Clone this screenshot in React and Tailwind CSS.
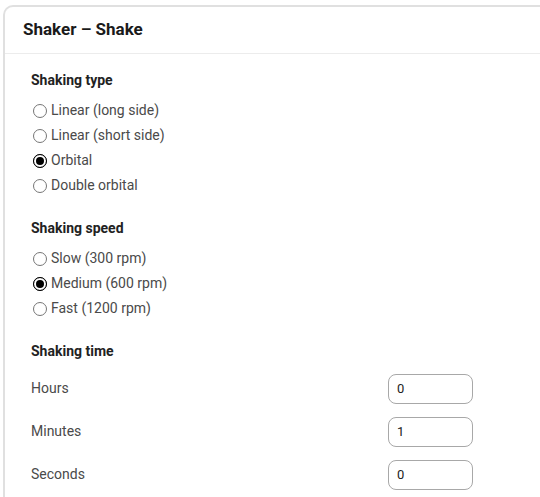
import React, { useState } from 'react';

const Radio = ({ label, checked, onChange }) => (
  <label className="flex items-center h-[25px] cursor-pointer">
    <span className="flex items-center justify-center w-[14px] h-[14px] rounded-full border border-[#767676] bg-white ml-[2px] mr-[4px]">
      {checked && <span className="w-[14px] h-[14px] rounded-full border-[1.5px] border-black flex items-center justify-center shrink-0">
        <span className="w-[8px] h-[8px] rounded-full bg-black" />
      </span>}
    </span>
    <input type="radio" className="hidden" checked={checked} onChange={onChange} />
    <span className="text-[14px] text-[#4a4a4a]">{label}</span>
  </label>
);

const TimeRow = ({ label, value, onChange }) => (
  <div className="flex items-center h-[43px]">
    <span className="w-[357px] text-[14px] text-[#4a4a4a]">{label}</span>
    <input
      type="text"
      value={value}
      onChange={(e) => onChange(e.target.value)}
      className="w-[85px] h-[30px] rounded-[8px] border border-[#a8a8a8] px-[8px] text-[13px] text-[#222] outline-none"
    />
  </div>
);

export default function App() {
  const [type, setType] = useState('Orbital');
  const [speed, setSpeed] = useState('Medium (600 rpm)');
  const [hours, setHours] = useState('0');
  const [minutes, setMinutes] = useState('1');
  const [seconds, setSeconds] = useState('0');

  const types = ['Linear (long side)', 'Linear (short side)', 'Orbital', 'Double orbital'];
  const speeds = ['Slow (300 rpm)', 'Medium (600 rpm)', 'Fast (1200 rpm)'];

  return (
    <div className="w-[540px] h-[497px] overflow-hidden bg-white pl-[3px] pt-[5px]" style={{ fontFamily: 'Roboto, "Liberation Sans", sans-serif' }}>
      <div className="w-[580px] h-[540px] rounded-tl-[10px] border-l-2 border-t-2 border-[#e0e0e0] bg-white">
        <div className="h-[47px] flex items-center pl-[18px] border-b border-[#ececec]">
          <h1 className="text-[17px] font-bold text-[#1a1a1a]">Shaker – Shake</h1>
        </div>
        <div className="pl-[26px] pt-[16px]">
          <h2 className="text-[14px] font-bold text-[#222] leading-[20px]">Shaking type</h2>
          <div className="mt-[8px]">
            {types.map((t) => (
              <Radio key={t} label={t} checked={type === t} onChange={() => setType(t)} />
            ))}
          </div>
          <h2 className="text-[14px] font-bold text-[#222] leading-[20px] mt-[20px]">Shaking speed</h2>
          <div className="mt-[8px]">
            {speeds.map((s) => (
              <Radio key={s} label={s} checked={speed === s} onChange={() => setSpeed(s)} />
            ))}
          </div>
          <h2 className="text-[14px] font-bold text-[#222] leading-[20px] mt-[20px]">Shaking time</h2>
          <div className="mt-[6px]">
            <TimeRow label="Hours" value={hours} onChange={setHours} />
            <TimeRow label="Minutes" value={minutes} onChange={setMinutes} />
            <TimeRow label="Seconds" value={seconds} onChange={setSeconds} />
          </div>
        </div>
      </div>
    </div>
  );
}
